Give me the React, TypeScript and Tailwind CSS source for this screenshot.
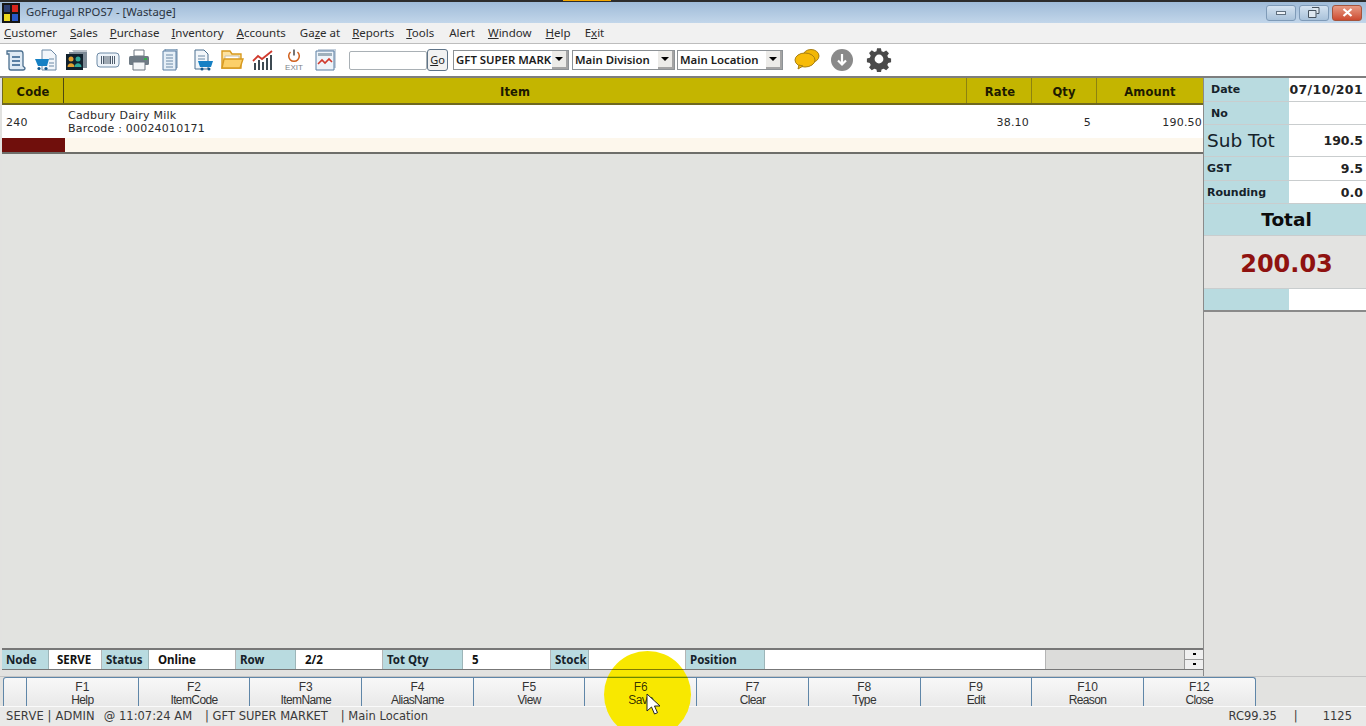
import React from "react";

const menus: [string, string, string][] = [
  ["", "C", "ustomer"], ["", "S", "ales"], ["", "P", "urchase"], ["", "I", "nventory"], ["", "A", "ccounts"],
  ["Ga", "z", "e at"], ["", "R", "eports"], ["", "T", "ools"], ["", "", "Alert"], ["", "W", "indow"], ["", "H", "elp"], ["E", "x", "it"],
];
const menuGaps = ["ml-[4px]", "ml-[13px]", "ml-[12px]", "ml-[12px]", "ml-[13px]", "ml-[14px]", "ml-[12px]", "ml-[12px]", "ml-[15px]", "ml-[13px]", "ml-[14px]", "ml-[14px]"];

const keys = [["F1", "Help"], ["F2", "ItemCode"], ["F3", "ItemName"], ["F4", "AliasName"], ["F5", "View"], ["F6", "Save"], ["F7", "Clear"], ["F8", "Type"], ["F9", "Edit"], ["F10", "Reason"], ["F12", "Close"]];

const Ic = ({ children, w = 24 }: { children: React.ReactNode; w?: number }) => (
  <svg width={w} height="22" viewBox="0 0 24 22" className="shrink-0">{children}</svg>
);

const icons = [
  <Ic key="a"><path d="M4 2h14c1 0 2 1 2 3v12l2 2c0 1-1 2-2 2H8c-1 0-2-1-2-2V5L4 5z" fill="#dfeaf4" stroke="#4b6f8f" strokeWidth="1.3" /><path d="M9 7h8v2H9zM9 11h8v2H9zM9 15h8v2H9z" fill="#5a7fa3" /></Ic>,
  <Ic key="b"><path d="M8 1h9l5 5v15H8z" fill="#f2f6fa" stroke="#6d8aa6" /><path d="M15 10h5M15 14h5M15 17h5" stroke="#6d8aa6" /><path d="M1 10h14l-2 7H4z" fill="#1580c4" /><circle cx="5" cy="19.5" r="1.6" fill="#10568a" /><circle cx="12" cy="19.5" r="1.6" fill="#10568a" /></Ic>,
  <Ic key="c"><path d="M7 1h15v16h-2z" fill="#b8c0c8" /><path d="M4 3h18v16H4z" fill="#7d8a96" /><path d="M1 5h17v16H1z" fill="#10202c" /><circle cx="6" cy="10" r="2.5" fill="#e0a030" /><path d="M2.5 18c0-5 7-5 7 0z" fill="#e0a030" /><circle cx="13" cy="10" r="2.5" fill="#2fa89a" /><path d="M9.5 18c0-5 7-5 7 0z" fill="#2fa89a" /></Ic>,
  <Ic key="d"><rect x="1" y="4" width="22" height="14" rx="3" fill="#eef4fa" stroke="#6d8aa6" /><path d="M5.5 7v8M7.5 7v8M9 7v8M11 7v8M13 7v8M14.5 7v8M16.5 7v8M18.5 7v8" stroke="#3c4c5c" strokeWidth=".9" /></Ic>,
  <Ic key="e"><path d="M7 1h10v6H7z" fill="#fff" stroke="#6c7680" /><rect x="2" y="7" width="20" height="9" rx="1.5" fill="#6f7b85" /><path d="M6 13h12v8H6z" fill="#f4f6f8" stroke="#6c7680" /><path d="M17 9h3v2h-3z" fill="#35b14a" /></Ic>,
  <Ic key="f"><path d="M7 0h12v19H7z" fill="#c5d6e6" stroke="#6d8aa6" /><path d="M5 2h13v19H5z" fill="#e6eff7" stroke="#5a7fa3" /><path d="M8 6h7M8 9h7M8 12h7M8 15h7M8 18h7" stroke="#6d8aa6" /></Ic>,
  <Ic key="g"><path d="M6 1h9l4 4v15H6z" fill="#f2f6fa" stroke="#4b6f8f" /><path d="M9 7h7M9 10h7" stroke="#6d8aa6" /><path d="M9 12h15l-2 6H11z" fill="#1580c4" /><circle cx="13" cy="20" r="1.5" fill="#10568a" /><circle cx="20" cy="20" r="1.5" fill="#10568a" /></Ic>,
  <Ic key="h"><path d="M2 2h8l2 3h9v14H2z" fill="#fde2a0" stroke="#d89a20" strokeWidth="1.4" /><path d="M5 7h14v4H5z" fill="#fff" stroke="#c9c2b0" /><path d="M2 19l2-9h19l-3 9z" fill="#fcd06a" stroke="#d89a20" strokeWidth="1.4" /></Ic>,
  <Ic key="i"><path d="M3 14h2v7H3zM7 11h2v10H7zM11 13h2v8h-2zM15 9h2v12h-2zM19 6h2v15h-2z" fill="#3e4a52" /><path d="M2 12l5-5 4 3 10-8" fill="none" stroke="#d03a2e" strokeWidth="1.8" /></Ic>,
  <Ic key="j"><path d="M8.5 3a5.3 5.3 0 1 0 7 0" fill="none" stroke="#d0601c" strokeWidth="1.5" /><path d="M12 0.5v6" stroke="#3a3a3a" strokeWidth="1.4" /><text x="12" y="21" textAnchor="middle" fontSize="8" fill="#7c8288" fontFamily="Liberation Sans, sans-serif">EXIT</text></Ic>,
  <Ic key="k"><path d="M5 0h18v19H5z" fill="#c5d0dc" /><path d="M3 2h18v19H3z" fill="#eef4fa" stroke="#5a7fa3" /><path d="M5 4h14v3H5z" fill="#9fb0bc" /><path d="M5 15l4-4 3 3 4-4 3 3" fill="none" stroke="#d03a2e" strokeWidth="1.6" /></Ic>,
];

const Combo = ({ w, text }: { w: string; text: string }) => (
  <div className={`${w} h-[20px] border border-[#8d9296] bg-white flex items-center relative`}>
    <span className="pl-[2px] text-[11.4px] font-semibold text-[#1c1c1c] whitespace-nowrap font-['Noto_Sans',sans-serif]">{text}</span>
    <span className="absolute right-0 top-0 bottom-0 w-[16px] bg-[#ecebe8] border-b-2 border-r-2 border-[#a4a4a4] flex items-center justify-center">
      <span className="w-0 h-0 border-l-[4px] border-r-[4px] border-t-[4px] border-l-transparent border-r-transparent border-t-black" />
    </span>
  </div>
);

const Lbl = ({ w, children }: { w: string; children?: React.ReactNode }) => (
  <div className={`${w} shrink-0 h-full bg-[#b9dbe0] border-r border-[#9db5b8] flex items-center pl-[4px] pt-[1px] text-[11.5px] font-bold text-[#15222a] whitespace-nowrap font-['Noto_Sans',sans-serif]`}>{children}</div>
);
const Val = ({ w, children, pl = "pl-[9px]" }: { w: string; children?: React.ReactNode; pl?: string }) => (
  <div className={`${w} shrink-0 h-full bg-white border-r border-[#b5b5b5] flex items-center ${pl} pt-[1px] text-[11.5px] font-bold text-[#111] whitespace-nowrap font-['Noto_Sans',sans-serif]`}>{children}</div>
);

const SideRow = ({ h, label, value, big, pl = "pl-[7px]", vc = "text-[12.5px] pt-[2px]" }: { h: string; label?: string; value?: string; big?: boolean; pl?: string; vc?: string }) => (
  <div className={`${h} flex border-b border-[#c9cdce]`}>
    <div className={`w-[85px] shrink-0 bg-[#b9dbe0] flex items-center whitespace-nowrap ${big ? "pl-[3px] text-[18.5px] text-[#15222a]" : `${pl} pt-[2px] text-[11px] font-bold text-[#15222a]`}`}>{label}</div>
    <div className={`flex-1 bg-white flex items-center justify-end pr-[3px] font-bold text-[#222] whitespace-nowrap ${vc}`}>{value}</div>
  </div>
);

export default function App() {
  return (
    <div className="relative w-[1366px] h-[726px] overflow-hidden bg-[#e2e2e0] flex flex-col font-['DejaVu_Sans',sans-serif]">
      {/* Title bar */}
      <div className="h-[23px] shrink-0 border-t-[2px] border-[#2c2c2c] bg-gradient-to-b from-[#9fbbd8] to-[#c2d6ea] flex items-center">
        <svg width="18" height="20" viewBox="0 0 18 20" className="ml-[2px] shrink-0">
          <rect width="18" height="20" fill="#151515" />
          <rect x="2" y="2" width="6" height="7" fill="#2c3e70" />
          <rect x="10" y="2" width="6" height="7" fill="#d8261c" />
          <rect x="2" y="11" width="6" height="7" fill="#ecd820" />
          <rect x="10" y="11" width="6" height="7" fill="#2a58c8" />
        </svg>
        <span className="ml-[6px] text-[11.3px] text-[#2a3340] font-['Noto_Sans',sans-serif] whitespace-nowrap">GoFrugal RPOS7 - [Wastage]</span>
        <div className="ml-auto mr-[4px] flex gap-[3px]">
          <div className="w-[30px] h-[16px] rounded-[3px] border border-[#7f9bb8] bg-gradient-to-b from-[#d4e2f0] to-[#a9c2da] flex items-center justify-center">
            <span className="w-[10px] h-[4px] bg-[#eef3f8] border border-[#60707f]" />
          </div>
          <div className="w-[30px] h-[16px] rounded-[3px] border border-[#7f9bb8] bg-gradient-to-b from-[#d4e2f0] to-[#a9c2da] flex items-center justify-center">
            <svg width="12" height="11" viewBox="0 0 12 11"><path d="M4 .5h7v6H8.5M.5 3.5h7.5v7H.5z" fill="#dfe8f0" stroke="#46525e" /></svg>
          </div>
          <div className="w-[30px] h-[16px] rounded-[3px] border border-[#a4543c] bg-gradient-to-b from-[#e69a84] to-[#cc4a30] flex items-center justify-center">
            <svg width="11" height="9" viewBox="0 0 11 9"><path d="M1.5 1l8 7M9.5 1l-8 7" stroke="#fff" strokeWidth="2.2" /></svg>
          </div>
        </div>
      </div>
      <div className="absolute left-[563px] top-0 w-[48px] h-[1px] bg-[#f5a800]" />

      {/* Menu */}
      <div className="h-[21px] shrink-0 bg-[#f1f1f1] border-b border-[#bdbdbd] flex items-center text-[11.5px] text-[#2c2c2c] font-['Noto_Sans',sans-serif]">
        {menus.map((m, i) => (
          <span key={i} className={`${menuGaps[i]} whitespace-nowrap`}>
            {m[0]}<span className="underline">{m[1]}</span>{m[2]}
          </span>
        ))}
      </div>

      {/* Toolbar */}
      <div className="h-[34px] shrink-0 bg-white border-b-[2px] border-[#7e7e7e] flex items-center pl-[3px]">
        <div className="flex gap-[7px]">{icons}</div>
        <div className="ml-[12px] w-[78px] h-[19px] border border-[#a9b0b5] rounded-[2px] bg-white" />
        <div className="w-[21px] h-[22px] border border-[#5f7488] rounded-[3px] bg-[#f2f2f2] flex items-center justify-center text-[11px] text-[#222] font-['Noto_Sans',sans-serif]"><span className="underline">G</span>o</div>
        <div className="ml-[5px]"><Combo w="w-[116px]" text="GFT SUPER MARK" /></div>
        <div className="ml-[3px]"><Combo w="w-[103px]" text="Main Division" /></div>
        <div className="ml-[2px]"><Combo w="w-[106px]" text="Main Location" /></div>
        <svg width="26" height="22" viewBox="0 0 26 22" className="ml-[11px] -mt-[2px] shrink-0">
          <ellipse cx="17" cy="8" rx="8" ry="6.5" fill="#f2b705" stroke="#a87f10" />
          <ellipse cx="11" cy="12" rx="10" ry="7" fill="#f7bb08" stroke="#a87f10" />
          <path d="M5 17l-1 4 5-3z" fill="#f7bb08" stroke="#a87f10" />
        </svg>
        <svg width="24" height="24" viewBox="0 0 24 24" className="ml-[10px] -mt-[1px] shrink-0">
          <circle cx="12" cy="12" r="11" fill="#8a8a8a" />
          <path d="M12 6v10M8 12.5l4 4 4-4" fill="none" stroke="#fff" strokeWidth="2.2" />
        </svg>
        <svg width="26" height="26" viewBox="0 0 24 24" className="ml-[12px] -mt-[2px] shrink-0">
          <path fill="#4a4a4a" fillRule="evenodd" d="M10 1h4l.6 3 2.2.9 2.6-1.7 2.8 2.8-1.7 2.6.9 2.2 3 .6v4l-3 .6-.9 2.2 1.7 2.6-2.8 2.8-2.6-1.7-2.2.9-.6 3h-4l-.6-3-2.2-.9-2.6 1.7-2.8-2.8 1.7-2.6-.9-2.2-3-.6v-4l3-.6.9-2.2L1.8 5.8l2.8-2.8 2.6 1.7L9.4 4zM12 7.5a4.5 4.5 0 1 0 0 9 4.5 4.5 0 0 0 0-9z" transform="translate(1.2 1.2) scale(.9)" />
        </svg>
      </div>

      {/* Body */}
      <div className="flex-1 min-h-0 flex">
        <div className="w-[1204px] shrink-0 flex flex-col pl-[2px] border-r border-[#8a8a8a]">
          <div className="h-[27px] shrink-0 bg-[#c4b500] border-b-2 border-l border-[#6f6820] flex text-[11.5px] font-bold text-[#1d1a00] tracking-[0.1px]">
            <div className="w-[61px] border-r border-[#4d4810] flex items-center justify-center pt-[4px]">Code</div>
            <div className="w-[903px] border-r border-[#8c8210] flex items-center justify-center pt-[4px]">Item</div>
            <div className="w-[65px] border-r border-[#8c8210] flex items-center justify-center pl-[2px] pt-[4px]">Rate</div>
            <div className="w-[65px] border-r border-[#8c8210] flex items-center justify-center pt-[4px]">Qty</div>
            <div className="flex-1 flex items-center justify-center pt-[4px]">Amount</div>
          </div>
          <div className="h-[33px] shrink-0 bg-white flex items-center text-[11px] text-[#2a2a2a] tracking-[0.2px]">
            <div className="w-[62px] pl-[4px] pt-[3px]">240</div>
            <div className="w-[903px] pl-[4px] leading-[13px]">
              <div>Cadbury Dairy Milk</div>
              <div>Barcode : 00024010171</div>
            </div>
            <div className="w-[65px] text-right pr-[3px] pt-[3px]">38.10</div>
            <div className="w-[65px] text-right pr-[6px] pt-[3px]">5</div>
            <div className="flex-1 text-right pr-[1px] pt-[3px]">190.50</div>
          </div>
          <div className="h-[16px] shrink-0 bg-[#fdf7ec] border-b-2 border-[#6e6e6a] flex">
            <div className="w-[63px] bg-[#700f0c]" />
          </div>
          <div className="flex-1 bg-[#e2e3e0]" />
          <div className="h-[22px] shrink-0 border-t-2 border-b border-[#777] flex">
            <Lbl w="w-[47px]">Node</Lbl>
            <Val w="w-[53px]" pl="pl-[8px]">SERVE</Val>
            <Lbl w="w-[47px]">Status</Lbl>
            <Val w="w-[87px]">Online</Val>
            <Lbl w="w-[60px]">Row</Lbl>
            <Val w="w-[87px]">2/2</Val>
            <Lbl w="w-[80px]">Tot Qty</Lbl>
            <Val w="w-[88px]">5</Val>
            <Lbl w="w-[38px]">Stock</Lbl>
            <Val w="w-[97px]" />
            <Lbl w="w-[79px]">Position</Lbl>
            <Val w="w-[281px]" />
            <div className="w-[139px] shrink-0 h-full bg-[#dcdcda] border-r border-[#999]" />
            <div className="flex-1 flex flex-col bg-[#f0f0f0]">
              <div className="h-1/2 border-b border-[#999] flex items-center justify-center"><span className="w-[3px] h-[2px] bg-black" /></div>
              <div className="h-1/2 flex items-center justify-center"><span className="w-[3px] h-[2px] bg-black" /></div>
            </div>
          </div>
          <div className="h-[6px] shrink-0" />
        </div>
        <div className="flex-1 min-w-0">
          <SideRow h="h-[24px]" label="Date" value="07/10/201" vc="text-[12.5px] tracking-[0.4px] pt-[2px]" />
          <SideRow h="h-[23px]" label="No" />
          <SideRow h="h-[32px]" label="Sub Tot" value="190.5" big vc="text-[12.5px] pt-[1px]" />
          <SideRow h="h-[24px]" label="GST" value="9.5" pl="pl-[3px]" />
          <SideRow h="h-[23px]" label="Rounding" value="0.0" pl="pl-[3px]" />
          <div className="h-[32px] bg-[#b9dbe0] border-b border-[#c9cdce] flex items-center justify-center pl-[3px] text-[18.5px] font-bold text-[#0c0c0c]">Total</div>
          <div className="h-[53px] bg-[#e3e3e1] border-b border-[#c9cdce] flex items-center justify-center pl-[3px] pt-[3px] text-[24px] font-bold text-[#8f1210]">200.03</div>
          <div className="h-[23px] border-b-2 border-[#8a8a8a] flex">
            <div className="w-[85px] bg-[#b9dbe0]" />
            <div className="flex-1 bg-white" />
          </div>
        </div>
      </div>

      {/* Function keys */}
      <div className="h-[30px] shrink-0 border-t border-[#c4c4c4] flex pl-[3px] font-['Liberation_Sans',sans-serif]">
        <div className="w-[24px] border-t border-l border-r border-[#5f86a8] rounded-tl-[3px] bg-gradient-to-b from-[#f8f8f8] to-[#e9e9e9]" />
        {keys.map((k) => (
          <div key={k[0]} className="w-[111.7px] border-t border-r border-[#5f86a8] bg-gradient-to-b from-[#f8f8f8] to-[#e9e9e9] flex flex-col items-center pt-[3px] text-[12px] leading-[13px] text-[#333] last:rounded-tr-[3px]">
            <span>{k[0]}</span>
            <span className="tracking-[-0.6px]">{k[1]}</span>
          </div>
        ))}
      </div>

      {/* Bottom status bar */}
      <div className="h-[20px] shrink-0 bg-[#e9e9e8] border-t border-[#fafafa] flex items-center pt-[1px] text-[11.5px] text-[#3a3a3a] whitespace-nowrap">
        <span className="ml-[6px] tracking-[0.15px]">SERVE | ADMIN</span>
        <span className="ml-[9px]">@ 11:07:24 AM</span>
        <span className="ml-[13px]">| GFT SUPER MARKET</span>
        <span className="ml-[13px]">| Main Location</span>
        <span className="ml-auto">RC99.35</span>
        <span className="ml-[17px]">|</span>
        <span className="ml-[25px] mr-[14px]">1125</span>
      </div>

      {/* Cursor highlight */}
      <div className="absolute left-[604px] top-[651px] w-[87px] h-[87px] rounded-full backdrop-brightness-[1.13]" />
      <div className="absolute left-[604px] top-[651px] w-[87px] h-[87px] rounded-full bg-[#f8e800] mix-blend-multiply" />
      <svg width="16" height="24" viewBox="0 0 16 24" className="absolute left-[646px] top-[693px]">
        <path d="M1 1v17l4.5-4 3 7 3-1.3-3-6.7H14z" fill="#fff" stroke="#222" strokeWidth="1" />
      </svg>
    </div>
  );
}
